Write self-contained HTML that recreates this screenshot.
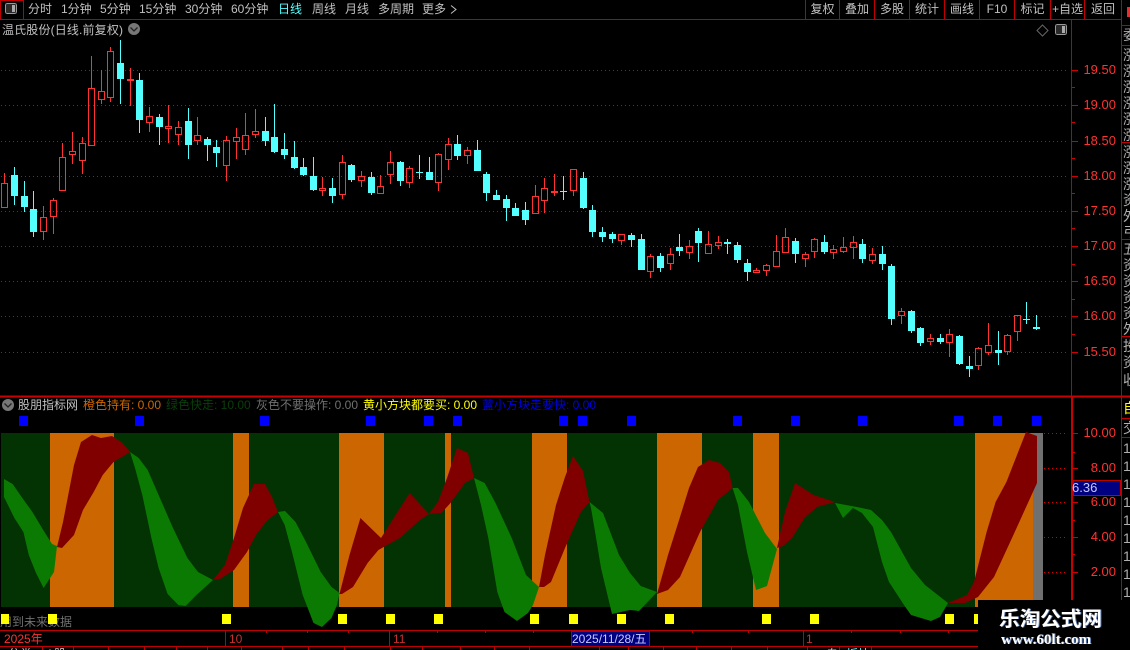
<!DOCTYPE html>
<html><head><meta charset="utf-8"><style>
html,body{margin:0;padding:0;background:#000;width:1130px;height:650px;overflow:hidden}
#r{position:relative;width:1130px;height:650px;overflow:hidden;background:#000;font:12px/14px "Liberation Sans","WenQuanYi Zen Hei","Noto Sans CJK SC",sans-serif;color:#c0c0c0}
svg{position:absolute;left:0;top:0}
.t{position:absolute;white-space:nowrap;line-height:14px}
.c{text-align:center}
.a{position:absolute;left:1066px;width:50px;text-align:right;color:#ff3232;font-size:13px;line-height:14px}
.n{position:absolute;left:1123px;width:7px;overflow:hidden;font-size:14px;line-height:16px;height:16px;color:#b0b0b0}
</style></head><body><div id="r">
<svg width="1130" height="650" viewBox="0 0 1130 650" shape-rendering="crispEdges">
<!-- frame lines -->
<path d="M0 19.5H1121M.5 0V19M23.5 0V19M0 .5H24M805.5 0V19M839.5 0V19M874.5 0V19M909.5 0V19M944.5 0V19M979.5 0V19M1014.5 0V19M1050.5 0V19M1084.5 0V19M1121.5 0V650M1121 25.5H1130M1121 45.5H1130M1121 142.5H1130M1121 239.5H1130M1121 336.5H1130M1121 418.5H1130M1121 437.5H1130M1071.5 19V397" stroke="#c00000" fill="none"/>
<path d="M0 396.5H1130" stroke="#c80000" stroke-width="2" fill="none"/>
<path d="M1071 397H1073V650H1071z" fill="#c80000"/>
<path d="M0 630.5H1071M0 646.5H1071M225.5 630V646M389.5 630V646M803.5 630V646M266.5 630V633M307.5 630V633M348.5 630V633M437.5 630V633M485.5 630V633M533.5 630V633M692.5 630V633M748.5 630V633M851.5 630V633M900.5 630V633M948.5 630V633" stroke="#c00000" fill="none"/>
<path d="M42.5 647V650M73.5 647V650M108.5 647V650M144.5 647V650M176.5 647V650M207.5 647V650M241.5 647V650M282.5 647V650M308.5 647V650M344.5 647V650M390.5 647V650M422.5 647V650M460.5 647V650M494.5 647V650M529.5 647V650M599.5 647V650M628.5 647V650M663.5 647V650M696.5 647V650M731.5 647V650M767.5 647V650M807.5 647V650M839.5 647V650M871.5 647V650" stroke="#c00000" fill="none"/>
<!-- grid -->
<path d="M1 70.5H1068M1 105.5H1068M1 141.5H1068M1 176.5H1068M1 211.5H1068M1 246.5H1068M1 281.5H1068M1 316.5H1068M1 352.5H1068M1044 433.5H1067M1044 468.5H1067M1044 502.5H1067M1044 537.5H1067M1044 572.5H1067" stroke="#d80000" stroke-dasharray="1 3" fill="none"/>
<path d="M1072 70.5h6M1072 105.5h6M1072 141.5h6M1072 176.5h6M1072 211.5h6M1072 246.5h6M1072 281.5h6M1072 316.5h6M1072 352.5h6M1072 87.5h3M1072 122.5h3M1072 158.5h3M1072 193.5h3M1072 228.5h3M1072 264.5h3M1072 299.5h3M1072 334.5h3M1072 433.5h6M1072 468.5h6M1072 502.5h6M1072 537.5h6M1072 572.5h6M1072 452.5h3M1072 520.5h3M1072 554.5h3" stroke="#d00000" fill="none"/>
<!-- red candles -->
<path fill="none" stroke="#ff3232" d="M4.5 173V183M1.5 183.5h6v24h-6zM43.5 206V217M40.5 217.5h6v14h-6zM43.5 232V240M53.5 198V200M50.5 200.5h6v16h-6zM53.5 217V234M62.5 143V157M59.5 157.5h6v33h-6zM72.5 132V151M69.5 151.5h6v3h-6zM72.5 155V164M82.5 137V143M79.5 143.5h6v17h-6zM82.5 161V174M91.5 56V88M88.5 88.5h6v57h-6zM101.5 70V91M98.5 91.5h6v8h-6zM101.5 100V104M110.5 47V51M107.5 51.5h6v46h-6zM110.5 98V102M130.5 68V106M149.5 107V116M146.5 116.5h6v6h-6zM149.5 123V132M168.5 105V126M165.5 126.5h6v2h-6zM168.5 129V143M178.5 121V127M175.5 127.5h6v7h-6zM178.5 135V145M197.5 117V135M194.5 135.5h6v5h-6zM197.5 141V145M226.5 136V140M223.5 140.5h6v25h-6zM226.5 166V181M236.5 128V137M233.5 137.5h6v4h-6zM236.5 142V159M245.5 113V135M242.5 135.5h6v14h-6zM245.5 150V155M255.5 109V131M252.5 131.5h6v3h-6zM255.5 135V138M322.5 177V188M319.5 188.5h6v2h-6zM322.5 191V196M342.5 155V162M339.5 162.5h6v32h-6zM342.5 195V199M361.5 171V176M358.5 176.5h6v4h-6zM361.5 181V187M380.5 175V186M377.5 186.5h6v7h-6zM390.5 151V162M387.5 162.5h6v12h-6zM390.5 175V184M409.5 166V168M406.5 168.5h6v14h-6zM409.5 183V188M438.5 153V154M435.5 154.5h6v28h-6zM438.5 183V191M448.5 138V144M445.5 144.5h6v15h-6zM448.5 160V170M467.5 147V150M464.5 150.5h6v5h-6zM467.5 156V164M535.5 185V196M532.5 196.5h6v17h-6zM544.5 178V188M541.5 188.5h6v12h-6zM544.5 201V213M554.5 174V191M551.5 191.5h6v1h-6zM554.5 193V196M570.5 169.5h6v21h-6zM573.5 191V196M618.5 234.5h6v6h-6zM621.5 241V245M650.5 254V256M647.5 256.5h6v15h-6zM650.5 272V278M670.5 248V254M667.5 254.5h6v9h-6zM670.5 264V270M689.5 240V246M686.5 246.5h6v6h-6zM689.5 253V259M708.5 231V244M705.5 244.5h6v9h-6zM718.5 236V242M715.5 242.5h6v3h-6zM718.5 246V249M756.5 268V270M753.5 270.5h6v2h-6zM766.5 264V265M763.5 265.5h6v5h-6zM766.5 271V276M776.5 235V251M773.5 251.5h6v15h-6zM785.5 228V237M782.5 237.5h6v15h-6zM805.5 252V254M802.5 254.5h6v4h-6zM805.5 259V267M814.5 238V239M811.5 239.5h6v12h-6zM814.5 252V258M833.5 245V249M830.5 249.5h6v3h-6zM833.5 253V259M843.5 237V247M840.5 247.5h6v4h-6zM843.5 252V253M853.5 236V242M850.5 242.5h6v5h-6zM853.5 248V259M872.5 248V254M869.5 254.5h6v6h-6zM872.5 261V264M901.5 308V311M898.5 311.5h6v4h-6zM901.5 316V324M930.5 334V338M927.5 338.5h6v3h-6zM930.5 342V345M949.5 329V334M946.5 334.5h6v8h-6zM949.5 343V357M978.5 347V348M975.5 348.5h6v17h-6zM978.5 366V370M988.5 323V345M985.5 345.5h6v7h-6zM988.5 353V355M1007.5 334V335M1004.5 335.5h6v16h-6zM1007.5 352V355M1014.5 315.5h6v16h-6zM1017.5 332V341"/>
<path fill="#ff3232" d="M127 79h7v2h-7z"/>
<!-- cyan candles -->
<path fill="none" stroke="#54ffff" d="M14.5 167V205M24.5 181V212M33.5 191V237M120.5 40V104M139.5 73V133M159.5 114V145M188.5 108V159M207.5 137V161M216.5 140V167M265.5 117V146M274.5 104V153M284.5 133V159M294.5 141V169M303.5 158V176M313.5 157V191M332.5 178V203M351.5 164V182M371.5 172V195M400.5 161V186M419.5 155V179M429.5 157V180M457.5 135V160M477.5 140V171M486.5 172V201M496.5 190V200M506.5 195V221M515.5 203V216M525.5 202V225M563.5 176V200M583.5 172V209M592.5 205V237M602.5 227V242M612.5 232V243M631.5 233V247M641.5 234V270M660.5 253V272M679.5 234V256M698.5 228V262M727.5 239V254M737.5 242V263M747.5 259V281M795.5 238V263M824.5 235V254M862.5 239V263M882.5 246V270M891.5 264V325M911.5 310V333M920.5 327V346M940.5 334V344M959.5 335V365M969.5 356V377M998.5 331V365M1026.5 302V324M1036.5 315V330"/>
<path fill="#54ffff" d="M11 175h7v21h-7zM21 196h7v11h-7zM30 209h7v23h-7zM117 63h7v16h-7zM136 80h7v40h-7zM156 117h7v10h-7zM185 121h7v24h-7zM204 139h7v6h-7zM213 147h7v6h-7zM262 131h7v10h-7zM271 137h7v15h-7zM281 149h7v6h-7zM291 157h7v11h-7zM300 167h7v8h-7zM310 176h7v14h-7zM329 188h7v8h-7zM348 165h7v15h-7zM368 177h7v16h-7zM397 162h7v19h-7zM416 172h7v1h-7zM426 172h7v8h-7zM454 144h7v12h-7zM474 150h7v21h-7zM483 174h7v19h-7zM493 195h7v5h-7zM503 199h7v9h-7zM512 208h7v8h-7zM522 210h7v10h-7zM560 191h7v1h-7zM580 178h7v30h-7zM589 210h7v22h-7zM599 232h7v5h-7zM609 234h7v5h-7zM628 235h7v5h-7zM638 239h7v31h-7zM657 256h7v12h-7zM676 247h7v4h-7zM695 231h7v12h-7zM724 242h7v2h-7zM734 245h7v15h-7zM744 263h7v9h-7zM792 241h7v13h-7zM821 242h7v10h-7zM859 244h7v15h-7zM879 254h7v10h-7zM888 266h7v53h-7zM908 311h7v20h-7zM917 328h7v15h-7zM937 338h7v4h-7zM956 336h7v28h-7zM966 366h7v3h-7zM995 350h7v3h-7zM1023 319h7v1h-7zM1033 327h7v2h-7z"/>
<!-- bands -->
<rect x="1" y="433" width="1032" height="174" fill="#033303"/>
<path fill="#cc6600" d="M50 433H114V607H50zM233 433H249V607H233zM339 433H384V607H339zM445 433H451V607H445zM532 433H567V607H532zM657 433H702V607H657zM753 433H779V607H753zM975 433H1033V607H975z"/>
<rect x="1033" y="433" width="10" height="167" fill="#707070"/>
<g shape-rendering="auto">
<!-- green ribbons -->
<path fill="#0b7a02" d="M4 479L12.6 484L21.6 497L32.4 512L43.2 530L52 544L57 546L54 572L43.6 588L36 573L28.8 555L23.4 532L14.4 518L4 497Z"/>
<path fill="#0b7a02" d="M130 452L138.7 458L147.7 470L158.6 495L173 528L187.4 558L198 572L213 580L196.4 595L185.6 606L178.4 605L167.6 594L158.6 568L151.4 538L142.3 495L135 468Z"/>
<path fill="#0b7a02" d="M278 512L285 511L295.5 522L306 542L320.7 572L331.5 587L339.5 593L337 605L331.5 618L322 627L313.5 623L302.7 595L292 552L284.7 525Z"/>
<path fill="#0b7a02" d="M474 478L484.7 483L495.5 503L511.7 538L526 575L539 587L533 605L528 613L517 621L504.5 612L497.3 592L488.3 538L481 505Z"/>
<path fill="#0b7a02" d="M589.5 502L603 513L619 555L630 573L640.7 586L657 592L639 611L630 610L612 614L601 568L595.6 535L591 508Z"/>
<path fill="#0b7a02" d="M732.6 488L738 488L749 502L765 533L777 549L767 586L756 590L747 552L738 505Z"/>
<path fill="#0b7a02" d="M835 503L857 507L871 510L882 520L891 532L911 568L925 585L948 603L940 617L931 621L911 615L904 605L889 582L882 562L873 527L862 513L853 508L843 518Z"/>
<!-- red ribbons -->
<path fill="#800000" d="M57 547L63 522L74 465L81 442L92 435L101 438L112 436L122.5 443L130 452L113.5 462L102.7 475L93.7 492L83 510L74 535L62 548Z"/>
<path fill="#800000" d="M213 580L225 565L234 538L243 508L254 484L265 484L272 497L278 512L266.7 521L256 535L247 552L234 570L220 579Z"/>
<path fill="#800000" d="M339.5 594L349.5 555L360.4 518L381 538L409.7 493L429 514L420 520L400 538L378.4 550L367.6 563L353 587L342 594Z"/>
<path fill="#800000" d="M429 514L438 502L447 478L457 448L468 453L474 478L465 483L450.5 503L441.4 513Z"/>
<path fill="#800000" d="M539 587L545 555L556 505L565 477L573 456L583 471L589.5 502L581 512L572 532L565 548L551 582L544 587Z"/>
<path fill="#800000" d="M657 594L668 555L680 517L689 488L698 467L709 460L720 463L729 472L732.6 488L718 500L700 532L680 577L668 590Z"/>
<path fill="#800000" d="M777 548L785 512L795 483L813.6 495L835 502L817 507L804.6 518L792 538L783 546Z"/>
<path fill="#800000" d="M948 603L967 595L974 582L986.6 532L995.6 502L1006.4 482L1026 432L1037 436L1037 483L1012 538L994 577L978 597L965 603Z"/>
</g>
<!-- blue squares -->
<path fill="#0000ff" d="M19 416h9v10h-9zM135 416h9v10h-9zM260 416h9v10h-9zM366 416h9v10h-9zM424 416h9v10h-9zM453 416h9v10h-9zM559 416h9v10h-9zM578 416h9v10h-9zM627 416h9v10h-9zM733 416h9v10h-9zM791 416h9v10h-9zM858 416h9v10h-9zM954 416h9v10h-9zM993 416h9v10h-9zM1032 416h9v10h-9z"/>
<!-- icons -->
<rect x="5.5" y="3.5" width="11" height="10" rx="2" fill="#2a2a2a" stroke="#999"/>
<rect x="12" y="5" width="3" height="7" fill="#aaa"/>
<rect x="1055.5" y="24.5" width="11" height="10" rx="2" fill="#2a2a2a" stroke="#999"/>
<rect x="1062" y="26" width="3" height="7" fill="#aaa"/>
<g shape-rendering="auto">
<path d="M1042.5 25L1048 30.5L1042.5 36L1037 30.5Z" fill="none" stroke="#666"/>
<circle cx="134" cy="29" r="6" fill="#777"/><path d="M130.5 27.5L134 31L137.5 27.5" fill="none" stroke="#222" stroke-width="1.3"/>
<circle cx="8" cy="405" r="6" fill="#777"/><path d="M4.5 403.5L8 407L11.5 403.5" fill="none" stroke="#222" stroke-width="1.3"/>
<path d="M451 5.5L456 9.5L451 13.5" fill="none" stroke="#c0c0c0"/>
</g>
<path fill="#e03030" d="M1127 7h3v10h-3z"/>
<!-- 6.36 box -->
<rect x="1073.5" y="480.5" width="47" height="15" fill="#000080" stroke="#c00000"/>
<!-- date box -->
<rect x="571.5" y="631.5" width="78" height="15" fill="#000080" stroke="#b00000"/>
</svg>

<span class="t" style="left:28px;top:2px">分时</span>
<span class="t" style="left:61px;top:2px">1分钟</span>
<span class="t" style="left:100px;top:2px">5分钟</span>
<span class="t" style="left:139px;top:2px">15分钟</span>
<span class="t" style="left:185px;top:2px">30分钟</span>
<span class="t" style="left:231px;top:2px">60分钟</span>
<span class="t" style="left:278px;top:2px;color:#54ffff">日线</span>
<span class="t" style="left:312px;top:2px">周线</span>
<span class="t" style="left:345px;top:2px">月线</span>
<span class="t" style="left:378px;top:2px">多周期</span>
<span class="t" style="left:422px;top:2px">更多</span>

<span class="t c" style="left:806px;width:33px;top:2px">复权</span>
<span class="t c" style="left:840px;width:34px;top:2px">叠加</span>
<span class="t c" style="left:875px;width:34px;top:2px">多股</span>
<span class="t c" style="left:910px;width:34px;top:2px">统计</span>
<span class="t c" style="left:945px;width:34px;top:2px">画线</span>
<span class="t c" style="left:980px;width:34px;top:2px">F10</span>
<span class="t c" style="left:1015px;width:35px;top:2px">标记</span>
<span class="t c" style="left:1051px;width:33px;top:2px">+自选</span>
<span class="t c" style="left:1085px;width:36px;top:2px">返回</span>

<span class="t" style="left:2px;top:23px;letter-spacing:.15px">温氏股份(日线.前复权)</span>

<span class="a" style="top:63px">19.50</span>
<span class="a" style="top:98px">19.00</span>
<span class="a" style="top:134px">18.50</span>
<span class="a" style="top:169px">18.00</span>
<span class="a" style="top:204px">17.50</span>
<span class="a" style="top:239px">17.00</span>
<span class="a" style="top:274px">16.50</span>
<span class="a" style="top:309px">16.00</span>
<span class="a" style="top:345px">15.50</span>
<span class="a" style="top:426px">10.00</span>
<span class="a" style="top:461px">8.00</span>
<span class="a" style="top:495px">6.00</span>
<span class="a" style="top:530px">4.00</span>
<span class="a" style="top:565px">2.00</span>
<span class="t" style="left:1072px;top:481px;font-size:13px;color:#c8c8ff">6.36</span>

<span class="t" style="left:18px;top:398px">股朋指标网</span>
<span class="t" style="left:83px;top:398px;color:#cc6600">橙色持有: 0.00</span>
<span class="t" style="left:166px;top:398px;color:#0a3f0a">绿色快走: 10.00</span>
<span class="t" style="left:256px;top:398px;color:#707070">灰色不要操作: 0.00</span>
<span class="t" style="left:363px;top:398px;color:#ffff00">黄小方块都要买: 0.00</span>
<span class="t" style="left:482px;top:398px;color:#0000e0">蓝小方块走要快: 0.00</span>

<span class="t" style="left:0;top:615px;color:#707070">用到未来数据</span>
<svg width="1130" height="650" viewBox="0 0 1130 650" shape-rendering="crispEdges"><path fill="#ffff00" d="M1 614h8v10h-8zM48 614h9v10h-9zM222 614h9v10h-9zM338 614h9v10h-9zM386 614h9v10h-9zM434 614h9v10h-9zM530 614h9v10h-9zM569 614h9v10h-9zM617 614h9v10h-9zM665 614h9v10h-9zM762 614h9v10h-9zM810 614h9v10h-9zM945 614h9v10h-9zM974 614h4v10h-4z"/></svg>

<span class="t" style="left:4px;top:632px;color:#ff3232">2025年</span>
<span class="t" style="left:229px;top:632px;color:#c83030">10</span>
<span class="t" style="left:393px;top:632px;color:#c83030">11</span>
<span class="t" style="left:572px;top:632px;color:#c8c8ff">2025/11/28/五</span>
<span class="t" style="left:806px;top:632px;color:#c83030">1</span>
<span class="t" style="left:8px;top:647px">分类</span>
<span class="t" style="left:46px;top:647px">A股</span>
<span class="t" style="left:826px;top:647px">自</span>
<span class="t" style="left:846px;top:647px;color:#54ffff">板块</span>

<span class="n" style="top:27px">委</span>
<span class="n" style="top:47px">涨</span><span class="n" style="top:63px">涨</span><span class="n" style="top:79px">涨</span><span class="n" style="top:95px">涨</span><span class="n" style="top:111px">涨</span><span class="n" style="top:127px">涨</span>
<span class="n" style="top:144px">涨</span><span class="n" style="top:160px">涨</span><span class="n" style="top:176px">涨</span><span class="n" style="top:192px">资</span><span class="n" style="top:208px">外</span><span class="n" style="top:224px">弓</span>
<span class="n" style="top:241px">五</span><span class="n" style="top:257px">资</span><span class="n" style="top:273px">资</span><span class="n" style="top:289px">资</span><span class="n" style="top:305px">资</span><span class="n" style="top:321px">外</span>
<span class="n" style="top:338px">投</span><span class="n" style="top:354px">资</span><span class="n" style="top:372px">收</span>
<span class="n" style="top:400px;color:#ffff00">自</span>
<span class="n" style="top:420px">交</span>
<span class="n" style="top:440px">1</span><span class="n" style="top:458px">1</span><span class="n" style="top:476px">1</span><span class="n" style="top:494px">1</span><span class="n" style="top:512px">1</span><span class="n" style="top:530px">1</span><span class="n" style="top:548px">1</span><span class="n" style="top:566px">1</span><span class="n" style="top:584px">1</span>

<div style="position:absolute;left:978px;top:600px;width:152px;height:50px;background:#000"></div>
<span class="t" style="left:999px;top:608px;font-size:20.6px;line-height:24px;font-weight:bold;color:#fff;text-shadow:1px 0 0 #5a7ab0">乐淘公式网</span>
<span class="t" style="left:1001px;top:632px;font:bold 15px/16px 'Liberation Serif',serif;color:#fff;text-shadow:1px 0 0 #5a7ab0">www.60lt.com</span>
</div></body></html>
